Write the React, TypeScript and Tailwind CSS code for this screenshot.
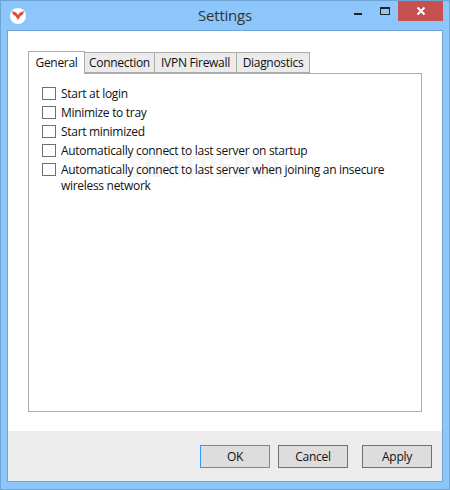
const font = { fontFamily: '"Open Sans", "Noto Sans", sans-serif' };

const OPTIONS = [
  "Start at login",
  "Minimize to tray",
  "Start minimized",
  "Automatically connect to last server on startup",
  "Automatically connect to last server when joining an insecure wireless network",
];

function Logo() {
  return (
    <div className="flex h-4 w-4 items-center justify-center rounded-full bg-white">
      <svg width="12" height="9" viewBox="0 0 12 9">
        <path d="M0 0 L4 1.5 L6 4 L8 1.5 L12 0 L11 3.5 L8.5 5 L6 9 L3.5 5 L1 3.5 Z" fill="#e2483d" />
      </svg>
    </div>
  );
}

function Tab({ label, active, width }: { label: string; active?: boolean; width: string }) {
  if (active) {
    return (
      <div className={`${width} relative z-10 -mb-px flex h-[23px] items-center justify-center border border-b-0 border-[#acacac] bg-white text-[12px] tracking-[-0.3px] text-[#111]`}>
        {label}
      </div>
    );
  }
  return (
    <div className={`${width} -ml-px flex h-[21px] items-center justify-center border border-[#acacac] bg-[#ebebeb] text-[12px] tracking-[-0.3px] text-[#111]`}>
      {label}
    </div>
  );
}

function Check({ label }: { label: string }) {
  return (
    <div className="relative flex items-start">
      <div className="mt-[2px] h-[13px] w-[14px] shrink-0 border border-[#707070] bg-white" />
      <div className="mt-[1px] ml-[5px] w-[330px] text-[12px] leading-[16px] tracking-[-0.3px] text-[#111]">{label}</div>
    </div>
  );
}

function Btn({ label, focused }: { label: string; focused?: boolean }) {
  return (
    <div className={`flex h-[23px] w-[70px] items-center justify-center border bg-[#dddddd] text-[12px] tracking-[-0.3px] text-[#111] ${focused ? "border-[#3399ff]" : "border-[#707070]"}`}>
      {label}
    </div>
  );
}

export default function App() {
  return (
    <div style={font} className="flex h-[490px] w-[450px] flex-col border border-[#6fa4d6] bg-[#8cc6fb]">
      <div className="grid h-[29px] shrink-0 grid-cols-[1fr_auto_1fr]">
        <div className="flex items-center pl-[9px]">
          <Logo />
        </div>
        <div className="flex items-center text-[15px] tracking-[-0.2px] text-[#333]">Settings</div>
        <div className="flex items-start justify-end pr-[6px]">
          <div className="mt-[12px] mr-[18px] h-[2px] w-[8px] bg-[#222]" />
          <div className="mt-[6px] mr-[8px] h-[8px] w-[10px] border border-t-2 border-[#222]" />
          <div className="flex h-[20px] w-[45px] items-center justify-center bg-[#c75050]">
            <svg width="10" height="10" viewBox="0 0 10 10">
              <path d="M1.5 1.5 L8.5 8.5 M8.5 1.5 L1.5 8.5" stroke="#fff" strokeWidth="2" />
            </svg>
          </div>
        </div>
      </div>
      <div className="mx-[6px] mb-[7px] flex flex-1 flex-col border border-[#6fa4d6] bg-white">
        <div className="flex flex-1 flex-col px-[20px] pt-[20px]">
          <div className="flex items-end">
            <Tab label="General" active width="w-[57px]" />
            <Tab label="Connection" width="w-[71px]" />
            <Tab label="IVPN Firewall" width="w-[83px]" />
            <Tab label="Diagnostics" width="w-[74px]" />
          </div>
          <div className="relative flex h-[339px] flex-col gap-[2px] border border-[#acacac] pt-[11px] pl-[13px]">
            {/* faint watermark under the rows */}
            <div className="absolute top-[77px] left-[99px] text-[30px] leading-none font-bold tracking-[-1px] text-[#f5f5f5]">
              SOFTPEDIA
            </div>
            {OPTIONS.map((o) => (
              <Check key={o} label={o} />
            ))}
          </div>
        </div>
        <div className="flex h-[50px] shrink-0 items-start justify-end bg-[#ececec] pt-[14px] pr-[10px]">
          <Btn label="OK" focused />
          <div className="ml-[8px]">
            <Btn label="Cancel" />
          </div>
          <div className="ml-[14px]">
            <Btn label="Apply" />
          </div>
        </div>
      </div>
    </div>
  );
}
